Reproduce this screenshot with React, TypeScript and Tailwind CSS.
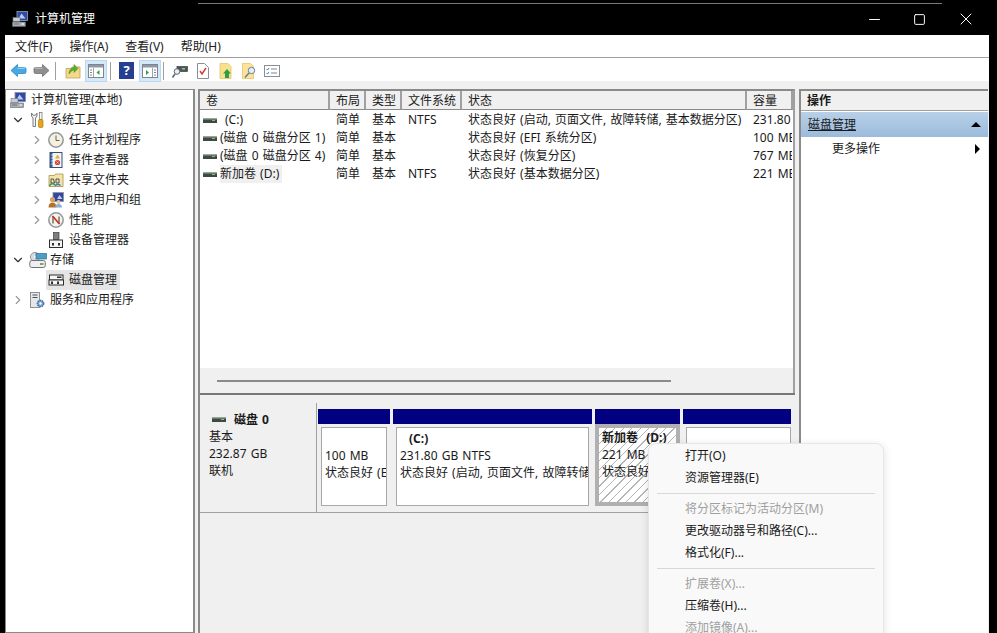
import type { ReactNode } from "react";
import { ChevronDown, ChevronRight, Minus, Square, X } from "lucide-react";

const FONT = "font-['Noto_Sans','Noto_Sans_CJK_SC',sans-serif]";

function Svg({ children, w = 16, h = 16 }: { children: ReactNode; w?: number; h?: number }) {
  return (
    <svg width={w} height={h} viewBox={`0 0 ${w} ${h}`} className="shrink-0">
      {children}
    </svg>
  );
}

function ComputerIcon() {
  return (
    <Svg>
      <rect x="5" y="0.5" width="10.5" height="9" fill="#2f4aa8" stroke="#8b94a3" strokeWidth="0.9" />
      <path d="M6.5 7.5l3-5 4 5z" fill="#b9cdf0" />
      <rect x="1" y="6.5" width="7" height="4" fill="#c9cdd2" stroke="#6b7280" strokeWidth="0.6" />
      <rect x="0.5" y="11" width="13" height="4.5" fill="#a9aeb4" stroke="#62676d" strokeWidth="0.6" />
      <rect x="9.5" y="12.5" width="2.5" height="1" fill="#fff" />
      <rect x="2" y="12.5" width="5" height="1" fill="#70757b" />
    </Svg>
  );
}

function ToolsIcon() {
  return (
    <Svg>
      <path d="M2.5 1v3l1.5 2v8.5h2.500V6L8 4V1L6.500 3.200H4z" fill="#f2f2f2" stroke="#6f6f6f" strokeWidth="0.9" />
      <rect x="10.500" y="0.500" width="2.500" height="7" fill="#f5f5f5" stroke="#6f6f6f" strokeWidth="0.7" />
      <rect x="9.500" y="7.500" width="4.500" height="8" rx="1.200" fill="#e8a614" stroke="#a36f08" strokeWidth="0.6" />
    </Svg>
  );
}

function ClockIcon() {
  return (
    <Svg>
      <circle cx="8" cy="8" r="7.2" fill="#f5f1dc" stroke="#8f979f" strokeWidth="1.5" />
      <path d="M8 3.5V8.5h3.5" fill="none" stroke="#5e6468" strokeWidth="1" />
    </Svg>
  );
}

function EventIcon() {
  return (
    <Svg>
      <rect x="2" y="0.5" width="12" height="15" fill="#f4f4f4" stroke="#34507c" strokeWidth="1" />
      <path d="M2 0.5h2.5v15H2z" fill="#35598f" />
      <path d="M3 3h3M3 6h3M3 9h3M3 12h3" stroke="#fff" strokeWidth="0.7" />
      <path d="M9.5 2.5l2.5 4H7z" fill="#e8b21f" />
      <circle cx="9.5" cy="10.5" r="2.6" fill="#cf4338" />
      <path d="M8.5 9.5l2 2M10.5 9.5l-2 2" stroke="#fff" strokeWidth="0.6" />
    </Svg>
  );
}

function ShareIcon() {
  return (
    <Svg>
      <path d="M1 3.5h5.5l1-1.5h7.5v12.5H1z" fill="#f4e4a8" stroke="#a8924a" strokeWidth="0.8" />
      <path d="M3 7h2.5l1 4H3zM8 7h3v4H8z" fill="none" stroke="#45505a" strokeWidth="1" />
      <path d="M1.5 14c1-2.5 4-3 5.5-1" fill="none" stroke="#3a9a4a" strokeWidth="1.6" />
      <path d="M7 14c1.5-2 4-2 5.5-.5" fill="none" stroke="#3f7fbf" strokeWidth="1.6" />
    </Svg>
  );
}

function UsersIcon() {
  return (
    <Svg>
      <rect x="5" y="0.5" width="10.5" height="9" fill="#33479f" stroke="#8b94a3" strokeWidth="0.8" />
      <path d="M9 7l2.5-4 3 4z" fill="#b9cdf0" />
      <circle cx="4.5" cy="7.5" r="2.6" fill="#d9a15e" />
      <path d="M0.5 15.5c0-3.5 1.7-5 4-5s4 1.5 4 5z" fill="#b5702a" />
      <circle cx="10.5" cy="10" r="2" fill="#e5c79b" />
      <path d="M7 15.5c0-2.5 1.5-3.5 3.5-3.5s3.5 1 3.5 3.5z" fill="#88aedb" />
    </Svg>
  );
}

function PerfIcon() {
  return (
    <Svg>
      <circle cx="8" cy="8" r="7.2" fill="#f7f3e6" stroke="#8f979f" strokeWidth="1.5" />
      <path d="M5 11.5V4.5l6 7V4.5" fill="none" stroke="#333" strokeWidth="1" />
      <path d="M4.5 4l7 8" stroke="#c8342b" strokeWidth="1.7" />
    </Svg>
  );
}

function DeviceIcon() {
  return (
    <Svg>
      <rect x="5.5" y="0.5" width="5.5" height="7" fill="#7e7e7e" stroke="#3e3e3e" strokeWidth="0.7" />
      <rect x="1.5" y="8" width="13" height="7.5" fill="#f4f4f4" stroke="#2e2e2e" strokeWidth="1" />
      <rect x="4" y="11" width="2" height="2.5" fill="#2e2e2e" />
      <rect x="10" y="11" width="2" height="2.5" fill="#2e2e2e" />
    </Svg>
  );
}

function StorageIcon() {
  return (
    <Svg w={18} h={16}>
      <circle cx="6" cy="5" r="4.6" fill="#d5dbe0" stroke="#7e858b" strokeWidth="0.8" />
      <circle cx="6" cy="5" r="1" fill="#fff" />
      <rect x="7" y="1.5" width="10.5" height="5.5" fill="#4c9dca" stroke="#35708f" strokeWidth="0.7" />
      <rect x="0.8" y="8.5" width="15.5" height="7" rx="2" fill="#eef0f1" stroke="#6e7378" strokeWidth="1" />
      <rect x="11" y="11" width="3.5" height="2" fill="#8da24c" />
    </Svg>
  );
}

function DiskMgmtIcon() {
  return (
    <Svg>
      <rect x="1.5" y="3" width="13.5" height="5" fill="#f5f5f5" stroke="#2e2e2e" strokeWidth="1" />
      <rect x="1" y="8" width="14.5" height="5" fill="#f5f5f5" stroke="#2e2e2e" strokeWidth="1" />
      <rect x="3" y="9.5" width="2" height="2.5" fill="#2e2e2e" />
      <rect x="9" y="9.5" width="2" height="2.5" fill="#2e2e2e" />
      <rect x="9" y="4.5" width="4.5" height="1.5" fill="#2e2e2e" />
    </Svg>
  );
}

function ServicesIcon() {
  return (
    <Svg>
      <rect x="1.5" y="0.5" width="9" height="15" fill="#e3e7ea" stroke="#747a7f" strokeWidth="0.8" />
      <path d="M3.5 3h5M3.5 5.5h5" stroke="#4e5357" strokeWidth="1" />
      <circle cx="11.5" cy="11.5" r="3.2" fill="#6fa0d6" stroke="#4b6f97" strokeWidth="1.4" strokeDasharray="1.5 0.8" />
      <circle cx="11.5" cy="11.5" r="1.2" fill="#fff" />
    </Svg>
  );
}

function DriveIcon() {
  return (
    <Svg w={14} h={8}>
      <rect x="0" y="2" width="14" height="5" fill="#3c4a40" />
      <rect x="0" y="2" width="14" height="1.5" fill="#9aa39c" />
      <rect x="9" y="4" width="3" height="1" fill="#8fb87f" />
    </Svg>
  );
}

function BackArrow() {
  return (
    <Svg w={17} h={15}>
      <path d="M1 7.5L7.5 1.5v3h7a1.5 1.5 0 0 1 1.5 1.5v3a1.5 1.5 0 0 1-1.5 1.5h-7v3z" fill="#46a9e4" stroke="#2b86c0" strokeWidth="0.8" strokeLinejoin="round" />
      <path d="M7.5 5.2h7.5" stroke="#a9dcf7" strokeWidth="1" />
    </Svg>
  );
}

function ForwardArrow() {
  return (
    <Svg w={17} h={15}>
      <path d="M16 7.5L9.5 1.5v3h-7A1.5 1.5 0 0 0 1 6v3a1.5 1.5 0 0 0 1.5 1.5h7v3z" fill="#8f8f8f" stroke="#707070" strokeWidth="0.8" strokeLinejoin="round" />
      <path d="M2 5.2h7.5" stroke="#c8c8c8" strokeWidth="1" />
    </Svg>
  );
}

function ToolButton({ children }: { children: ReactNode }) {
  return (
    <div className="flex h-[22px] w-[22px] items-center justify-center border border-[#b9d9f2] bg-[#d4e8f8]">
      {children}
    </div>
  );
}

function PaneIcon({ side }: { side: "left" | "right" }) {
  return (
    <Svg>
      <rect x="0.5" y="1.5" width="15" height="13" fill="#fff" stroke="#7d8590" />
      <rect x="1" y="2" width="14" height="2.5" fill="#8f99a5" />
      {side === "left" ? (
        <>
          <path d="M5.5 5v9" stroke="#9ba5b0" />
          <path d="M2 7h2M2 9.5h2M2 12h2" stroke="#7d8590" />
          <path d="M11.5 7v5l-3-2.5z" fill="#2f9e44" />
        </>
      ) : (
        <>
          <path d="M10.5 5v9" stroke="#9ba5b0" />
          <path d="M4 7v5l3-2.5z" fill="#2f9e44" />
          <path d="M12 7h2M12 9.5h2M12 12h2" stroke="#7d8590" />
        </>
      )}
    </Svg>
  );
}

function Toolbar() {
  return (
    <div className="flex h-[23px] items-center bg-white pl-[2px] pt-[2px]">
      <div className="flex w-[23px] justify-center"><BackArrow /></div>
      <div className="flex w-[23px] justify-center"><ForwardArrow /></div>
      <div className="ml-[2px] h-[18px] w-px bg-[#a0a0a0]" />
      <div className="ml-[9px] mr-[4px] flex">
        <Svg>
          <path d="M1 5.5h5l1-1.5h8v11H1z" fill="#f3d98b" stroke="#c2a250" strokeWidth="0.8" />
          <path d="M4 11c0-4 2.5-6.5 5-6.500V1.500l4 4-4 4V7C7.500 7 6 8.500 4 11z" fill="#5bb02c" stroke="#3f8a1c" strokeWidth="0.5" />
        </Svg>
      </div>
      <ToolButton><PaneIcon side="left" /></ToolButton>
      <div className="ml-[3px] h-[18px] w-px bg-[#a0a0a0]" />
      <div className="ml-[8px] flex h-[17px] w-[15px] items-center justify-center bg-[#25408f] text-[13px] font-bold text-white">?</div>
      <div className="ml-[5px]"><ToolButton><PaneIcon side="right" /></ToolButton></div>
      <div className="ml-[2px] h-[18px] w-px bg-[#a0a0a0]" />
      <div className="ml-[8px] flex gap-[7px]">
        <Svg>
          <rect x="5" y="3.5" width="10.5" height="5" fill="#4f5459" stroke="#3c4045" strokeWidth="0.7" />
          <rect x="10" y="5" width="3" height="1.5" fill="#8fd07f" />
          <circle cx="5" cy="8.5" r="2.8" fill="#e8eef5" stroke="#60666c" />
          <path d="M3 11l-2.5 3.5" stroke="#60666c" strokeWidth="1.6" />
        </Svg>
        <Svg>
          <path d="M2.5 0.5h7l4 4v11h-11z" fill="#fff" stroke="#8a8f96" />
          <path d="M5 8l2 3 4-6" fill="none" stroke="#d9362b" strokeWidth="1.4" />
        </Svg>
        <Svg>
          <path d="M2 0.5h8l3 3v12H2z" fill="#fbe08c" stroke="#e0bf5a" strokeWidth="0.7" />
          <path d="M9 6l4 4.5h-2V15H7v-4.500H5z" fill="#2f9e44" />
        </Svg>
        <Svg>
          <path d="M1.5 0.5h8l3 3v12h-11z" fill="#fbe39c" stroke="#e0bf5a" strokeWidth="0.7" />
          <circle cx="10.5" cy="7.5" r="3.2" fill="#e6eff8" stroke="#6b7d8f" />
          <path d="M8 10L4 14.5" stroke="#6b7d8f" strokeWidth="1.5" />
        </Svg>
        <Svg>
          <rect x="0.5" y="2.5" width="15" height="11" fill="#fff" stroke="#8a8f96" />
          <path d="M2.5 6l1 1 1.5-2M2.5 10l1 1 1.5-2" fill="none" stroke="#3f7fbf" />
          <path d="M7 6h6M7 10h6" stroke="#7d8590" />
        </Svg>
      </div>
    </div>
  );
}

function TreeRow({
  indent,
  arrow,
  icon,
  label,
  selected,
}: {
  indent: number;
  arrow?: "open" | "closed";
  icon: ReactNode;
  label: string;
  selected?: boolean;
}) {
  return (
    <div className="flex h-5 items-center" style={{ paddingLeft: indent }}>
      <div className="flex w-[19px] shrink-0 items-center justify-center">
        {arrow === "open" && <ChevronDown size={14} strokeWidth={2} className="text-[#333]" />}
        {arrow === "closed" && <ChevronRight size={14} strokeWidth={2} className="text-[#999]" />}
      </div>
      <div className={"flex h-5 items-center pr-[3px] " + (selected ? "bg-[#e5e5e5]" : "")}>
        <div className="ml-[2px] flex w-[21px] shrink-0">{icon}</div>
        <span className="whitespace-nowrap">{label}</span>
      </div>
    </div>
  );
}

function Tree() {
  return (
    <div className="w-[190px] shrink-0 border border-r-2 border-[#8a8a8a] bg-white">
      <div className="flex h-5 items-center pl-[4px]">
        <div className="mr-[2px] flex w-[19px]"><ComputerIcon /></div>
        <span>计算机管理(本地)</span>
      </div>
      <TreeRow indent={2} arrow="open" icon={<ToolsIcon />} label="系统工具" />
      <TreeRow indent={21} arrow="closed" icon={<ClockIcon />} label="任务计划程序" />
      <TreeRow indent={21} arrow="closed" icon={<EventIcon />} label="事件查看器" />
      <TreeRow indent={21} arrow="closed" icon={<ShareIcon />} label="共享文件夹" />
      <TreeRow indent={21} arrow="closed" icon={<UsersIcon />} label="本地用户和组" />
      <TreeRow indent={21} arrow="closed" icon={<PerfIcon />} label="性能" />
      <TreeRow indent={21} icon={<DeviceIcon />} label="设备管理器" />
      <TreeRow indent={2} arrow="open" icon={<StorageIcon />} label="存储" />
      <TreeRow indent={21} icon={<DiskMgmtIcon />} label="磁盘管理" selected />
      <TreeRow indent={2} arrow="closed" icon={<ServicesIcon />} label="服务和应用程序" />
    </div>
  );
}

const COLUMNS = [
  { label: "卷", w: "w-[130px]" },
  { label: "布局", w: "w-[36px]" },
  { label: "类型", w: "w-[36px]" },
  { label: "文件系统", w: "w-[60px]" },
  { label: "状态", w: "w-[285px]" },
  { label: "容量", w: "w-[46px]" },
];

const ROWS = [
  { name: "(C:)", indent: true, layout: "简单", kind: "基本", fs: "NTFS", status: "状态良好 (启动, 页面文件, 故障转储, 基本数据分区)", size: "231.80" },
  { name: "(磁盘 0 磁盘分区 1)", layout: "简单", kind: "基本", fs: "", status: "状态良好 (EFI 系统分区)", size: "100 MB" },
  { name: "(磁盘 0 磁盘分区 4)", layout: "简单", kind: "基本", fs: "", status: "状态良好 (恢复分区)", size: "767 MB" },
  { name: "新加卷 (D:)", shaded: true, layout: "简单", kind: "基本", fs: "NTFS", status: "状态良好 (基本数据分区)", size: "221 MB" },
];

function VolumeList() {
  return (
    <div className="flex h-[279px] flex-col border-r-2 border-t-2 border-r-[#a0a0a0] border-t-[#8a8a8a] bg-white">
      <div className="flex h-[19px] shrink-0 bg-[#f0f0f0]">
        {COLUMNS.map((c) => (
          <div key={c.label} className={`${c.w} flex items-center border-b border-r-2 border-b-[#8a8a8a] border-r-[#a0a0a0] pl-[6px] pt-[1px]`}>
            {c.label}
          </div>
        ))}
      </div>
      <div className="flex-1 pt-[1px]">
        {ROWS.map((r) => (
          <div key={r.name} className="flex h-[18px] items-center whitespace-nowrap">
            <div className="flex w-[130px] items-center pl-[3px]">
              <DriveIcon />
              <span className={(r.indent ? "ml-[8px] " : "ml-[3px] ") + (r.shaded ? "bg-[#f0f0f0] pr-[3px]" : "")}>{r.name}</span>
            </div>
            <div className="w-[36px] pl-[6px]">{r.layout}</div>
            <div className="w-[36px] pl-[6px]">{r.kind}</div>
            <div className="w-[60px] pl-[6px]">{r.fs}</div>
            <div className="w-[285px] pl-[6px]">{r.status}</div>
            <div className="w-[45px] overflow-hidden pl-[6px]">{r.size}</div>
          </div>
        ))}
      </div>
    </div>
  );
}

function Partition({
  w,
  title,
  titleIndent,
  lines,
  selected,
  flush,
}: {
  w: string;
  title?: string;
  titleIndent?: boolean;
  lines: string[];
  selected?: boolean;
  flush?: boolean;
}) {
  return (
    <div className={`${w} shrink-0`}>
      <div className="h-[15px] bg-[#000080]" />
      {selected ? (
        <div className="h-[82px] overflow-hidden whitespace-pre border-[4px] border-[#b0b0b0] bg-white bg-[repeating-linear-gradient(135deg,transparent,transparent_5px,#b5b5b5_5px,#b5b5b5_6px)] pl-[3px] pt-[1px] leading-[17px]">
          <div className="h-[17px] font-bold">{title}</div>
          {lines.map((l) => (
            <div key={l}>{l}</div>
          ))}
        </div>
      ) : (
        <div className={"ml-[3px] mt-[3px] h-[79px] overflow-hidden whitespace-nowrap border border-[#a8a8a8] bg-white pl-[3px] pt-[2px] leading-[17px] " + (flush ? "" : "mr-[3px]")}>
          <div className={"h-[17px] font-bold " + (titleIndent ? "pl-[9px]" : "")}>{title}</div>
          {lines.map((l) => (
            <div key={l}>{l}</div>
          ))}
        </div>
      )}
    </div>
  );
}

function DiskArea() {
  return (
    <div className="flex-1 bg-[#f0f0f0] pt-[8px]">
      <div className="flex h-[110px] border-b border-[#a0a0a0]">
        <div className="ml-[1px] h-[110px] w-[116px] shrink-0 border-b border-r border-[#a0a0a0] bg-[#f0f0f0] pl-[8px] pt-[7px] leading-[17px]">
          <div className="flex h-[18px] items-center pl-[3px] font-bold">
            <DriveIcon />
            <span className="ml-[8px]">磁盘 0</span>
          </div>
          <div>基本</div>
          <div>232.87 GB</div>
          <div>联机</div>
        </div>
        <div className="ml-[1px] flex gap-[3px] pt-[6px]">
          <Partition w="w-[72px]" title=" " lines={["100 MB", "状态良好 (E"]} />
          <Partition w="w-[199px]" title="(C:)" titleIndent lines={["231.80 GB NTFS", "状态良好 (启动, 页面文件, 故障转储"]} />
          <Partition w="w-[85px]" title="新加卷  (D:)" lines={["221 MB NTFS", "状态良好 (基本"]} selected />
          <Partition w="w-[108px]" lines={[]} flush />
        </div>
      </div>
    </div>
  );
}

function ActionPane() {
  return (
    <div className="ml-[4px] flex w-[189px] shrink-0 flex-col border-l-2 border-t-2 border-[#8a8a8a] bg-white">
      <div className="flex h-[20px] items-center border-b border-[#a0a0a0] bg-[#f0f0f0] pl-[6px] font-bold">操作</div>
      <div className="mt-[1px] flex h-[25px] items-center justify-between bg-gradient-to-b from-[#b8d0e8] to-[#9bbbdb] pl-[7px] pr-[7px]">
        <span className="underline">磁盘管理</span>
        <div className="h-0 w-0 border-x-[5px] border-b-[5px] border-x-transparent border-b-black" />
      </div>
      <div className="flex h-[23px] items-center justify-between pl-[31px] pr-[8px]">
        <span>更多操作</span>
        <div className="h-0 w-0 border-y-[5px] border-l-[5px] border-y-transparent border-l-black" />
      </div>
    </div>
  );
}

function MenuItem({ label, disabled }: { label: string; disabled?: boolean }) {
  return (
    <div className={"flex h-[22px] items-center whitespace-nowrap pl-[36px] " + (disabled ? "text-[#a0a0a0]" : "text-[#1a1a1a]")}>
      {label}
    </div>
  );
}

function ContextMenu() {
  return (
    <div className="absolute left-[648px] top-[443px] h-[220px] w-[236px] rounded-lg border border-[#e6e6e6] bg-[#f9f9f9] pt-[1px] shadow-[0_2px_8px_rgba(0,0,0,0.12)]">
      <MenuItem label="打开(O)" />
      <MenuItem label="资源管理器(E)" />
      <div className="mx-[8px] my-[4px] h-px bg-[#d8d8d8]" />
      <MenuItem label="将分区标记为活动分区(M)" disabled />
      <MenuItem label="更改驱动器号和路径(C)..." />
      <MenuItem label="格式化(F)..." />
      <div className="mx-[8px] my-[4px] h-px bg-[#d8d8d8]" />
      <MenuItem label="扩展卷(X)..." disabled />
      <MenuItem label="压缩卷(H)..." />
      <MenuItem label="添加镜像(A)..." disabled />
    </div>
  );
}

export default function App() {
  return (
    <div className={`${FONT} relative h-[633px] w-[997px] overflow-hidden bg-black text-[12px] text-[#1a1a1a] [word-spacing:1px]`}>
      <div className="ml-[198px] mt-[3px] h-px w-[744px] bg-[#777]" />
      <div className="flex h-[31px] items-center pb-[1px] text-white">
        <div className="ml-[12px]"><ComputerIcon /></div>
        <span className="ml-[7px]">计算机管理</span>
        <div className="ml-auto flex items-center pr-[21px] text-white">
          <Minus size={17} strokeWidth={1.4} />
          <Square size={13} strokeWidth={1.8} className="ml-[30px]" />
          <X size={20} strokeWidth={1.2} className="ml-[30px]" />
        </div>
      </div>
      <div className="ml-[5px] flex h-[598px] w-[984px] flex-col bg-[#f0f0f0]">
        <div className="flex h-[23px] shrink-0 items-center gap-[17px] border-b border-[#a0a0a0] bg-white pl-[10px] pt-[2px]">
          <span>文件(F)</span>
          <span>操作(A)</span>
          <span>查看(V)</span>
          <span>帮助(H)</span>
        </div>
        <Toolbar />
        <div className="mt-[8px] flex min-h-0 flex-1">
          <Tree />
          <div className="ml-[3px] flex w-[597px] shrink-0 flex-col border-l-2 border-[#8a8a8a]">
            <VolumeList />
            <div className="flex h-[25px] items-center border-r-2 border-[#a0a0a0] bg-[#f0f0f0] pl-[17px]">
              <div className="h-[2px] w-[454px] bg-[#8a8a8a]" />
            </div>
            <div className="h-[2px] bg-[#777]" />
            <DiskArea />
          </div>
          <ActionPane />
        </div>
      </div>
      <ContextMenu />
    </div>
  );
}
